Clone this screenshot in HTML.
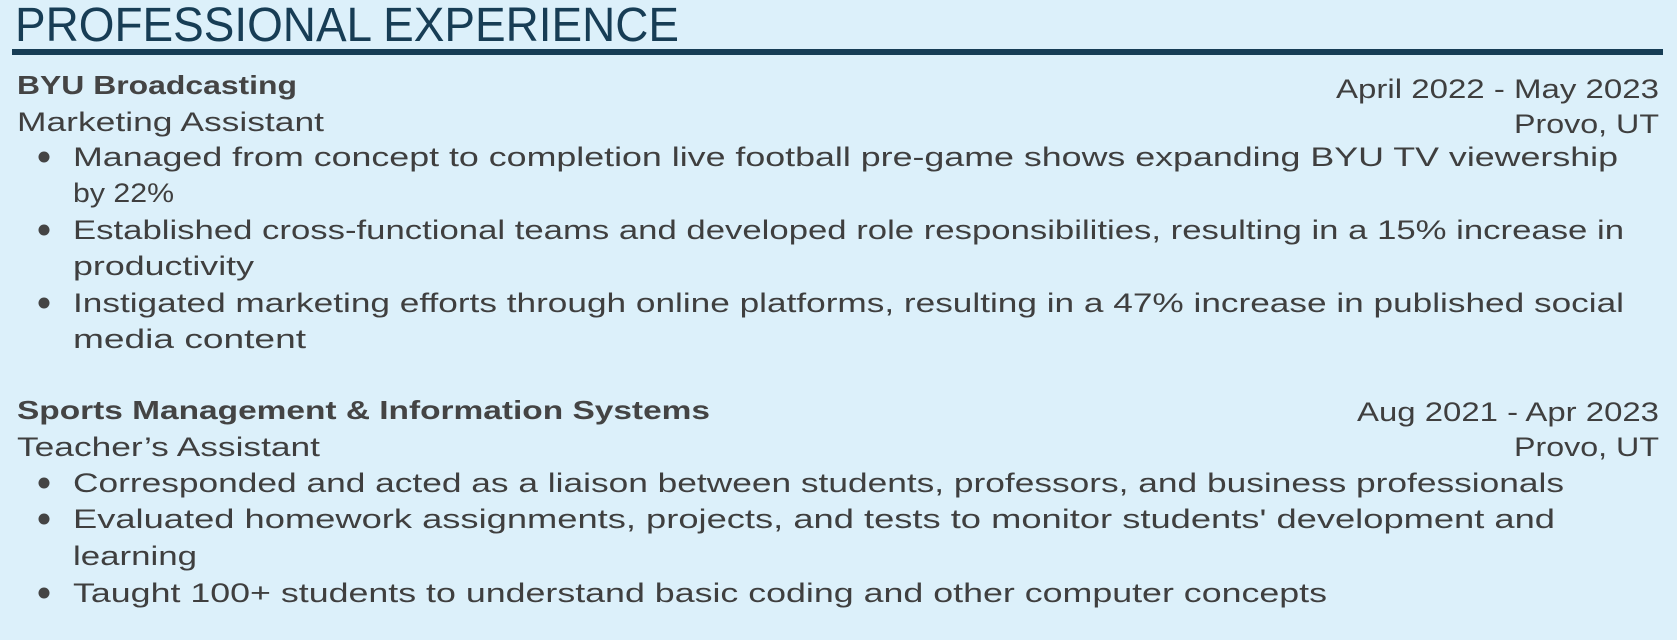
<!DOCTYPE html>
<html><head><meta charset="utf-8"><style>
html,body{margin:0;padding:0;background:#dcf0fa;}
svg{display:block}
text{font-family:"Liberation Sans",sans-serif;fill:#3f3f3f;}
.t{font-size:27px;}
.b{font-size:26px;font-weight:bold;fill:#444;}
</style></head><body>
<svg width="1677" height="640" viewBox="0 0 1677 640" xmlns="http://www.w3.org/2000/svg">
<rect width="1677" height="640" fill="#dcf0fa"/>
<text x="15" y="41" font-size="48" style="fill:#173d55" textLength="664" lengthAdjust="spacingAndGlyphs">PROFESSIONAL EXPERIENCE</text>
<rect x="12" y="49" width="1651" height="6" fill="#173d55"/>

<text class="b" x="17" y="94" textLength="280" lengthAdjust="spacingAndGlyphs">BYU Broadcasting</text>
<text class="t" x="1336" y="98" textLength="323" lengthAdjust="spacingAndGlyphs">April 2022 - May 2023</text>
<text class="t" x="17" y="131" textLength="307" lengthAdjust="spacingAndGlyphs">Marketing Assistant</text>
<text class="t" x="1514" y="133" textLength="145" lengthAdjust="spacingAndGlyphs">Provo, UT</text>
<circle cx="44" cy="157" r="5.5" fill="#444"/>
<text class="t" x="73" y="166" textLength="1545" lengthAdjust="spacingAndGlyphs">Managed from concept to completion live football pre-game shows expanding BYU TV viewership</text>
<text class="t" x="73" y="202" textLength="101" lengthAdjust="spacingAndGlyphs">by 22%</text>
<circle cx="44" cy="230" r="5.5" fill="#444"/>
<text class="t" x="73" y="239" textLength="1551" lengthAdjust="spacingAndGlyphs">Established cross-functional teams and developed role responsibilities, resulting in a 15% increase in</text>
<text class="t" x="73" y="275" textLength="181" lengthAdjust="spacingAndGlyphs">productivity</text>
<circle cx="44" cy="303" r="5.5" fill="#444"/>
<text class="t" x="73" y="312" textLength="1551" lengthAdjust="spacingAndGlyphs">Instigated marketing efforts through online platforms, resulting in a 47% increase in published social</text>
<text class="t" x="73" y="348" textLength="233" lengthAdjust="spacingAndGlyphs">media content</text>

<text class="b" x="17" y="419" textLength="693" lengthAdjust="spacingAndGlyphs">Sports Management &amp; Information Systems</text>
<text class="t" x="1357" y="421" textLength="302" lengthAdjust="spacingAndGlyphs">Aug 2021 - Apr 2023</text>
<text class="t" x="17" y="456" textLength="303" lengthAdjust="spacingAndGlyphs">Teacher’s Assistant</text>
<text class="t" x="1514" y="456" textLength="145" lengthAdjust="spacingAndGlyphs">Provo, UT</text>
<circle cx="44" cy="483" r="5.5" fill="#444"/>
<text class="t" x="73" y="492" textLength="1491" lengthAdjust="spacingAndGlyphs">Corresponded and acted as a liaison between students, professors, and business professionals</text>
<circle cx="44" cy="519" r="5.5" fill="#444"/>
<text class="t" x="73" y="528" textLength="1482" lengthAdjust="spacingAndGlyphs">Evaluated homework assignments, projects, and tests to monitor students' development and</text>
<text class="t" x="73" y="565" textLength="124" lengthAdjust="spacingAndGlyphs">learning</text>
<circle cx="44" cy="593" r="5.5" fill="#444"/>
<text class="t" x="73" y="602" textLength="1254" lengthAdjust="spacingAndGlyphs">Taught 100+ students to understand basic coding and other computer concepts</text>
</svg>
</body></html>
